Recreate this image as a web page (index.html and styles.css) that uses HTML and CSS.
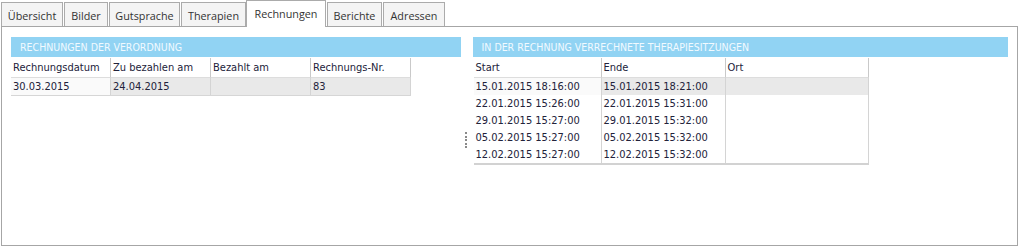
FILE: index.html
```html
<!DOCTYPE html>
<html lang="de">
<head>
<meta charset="utf-8">
<title>Rechnungen</title>
<link rel="stylesheet" href="styles.css">
</head>
<body>
<div class="tabs">
  <div class="tab w1">Übersicht</div>
  <div class="tab w2">Bilder</div>
  <div class="tab w3">Gutsprache</div>
  <div class="tab w4">Therapien</div>
  <div class="tab active w5">Rechnungen</div>
  <div class="tab w6">Berichte</div>
  <div class="tab w7">Adressen</div>
</div>
<div class="panel">
  <section class="left">
    <div class="band">RECHNUNGEN DER VERORDNUNG</div>
    <div class="grid gleft">
      <div class="hc">Rechnungsdatum</div>
      <div class="hc">Zu bezahlen am</div>
      <div class="hc">Bezahlt am</div>
      <div class="hc">Rechnungs-Nr.</div>
      <div class="dc sel focus">30.03.2015</div>
      <div class="dc sel">24.04.2015</div>
      <div class="dc sel"></div>
      <div class="dc sel">83</div>
    </div>
  </section>
  <div class="splitter"><div class="dots"></div></div>
  <section class="right">
    <div class="band">IN DER RECHNUNG VERRECHNETE THERAPIESITZUNGEN</div>
    <div class="grid gright">
      <div class="hc">Start</div>
      <div class="hc">Ende</div>
      <div class="hc">Ort</div>
      <div class="dc sel focus">15.01.2015 18:16:00</div>
      <div class="dc sel">15.01.2015 18:21:00</div>
      <div class="dc sel"></div>
      <div class="dc">22.01.2015 15:26:00</div>
      <div class="dc">22.01.2015 15:31:00</div>
      <div class="dc"></div>
      <div class="dc">29.01.2015 15:27:00</div>
      <div class="dc">29.01.2015 15:32:00</div>
      <div class="dc"></div>
      <div class="dc">05.02.2015 15:27:00</div>
      <div class="dc">05.02.2015 15:32:00</div>
      <div class="dc"></div>
      <div class="dc">12.02.2015 15:27:00</div>
      <div class="dc">12.02.2015 15:32:00</div>
      <div class="dc"></div>
    </div>
  </section>
</div>
</body>
</html>
```

FILE: styles.css
```css
html, body {
  margin: 0;
  padding: 0;
  background: #ffffff;
}
body {
  width: 1018px;
  height: 246px;
  overflow: hidden;
  font-family: "DejaVu Sans Condensed", "DejaVu Sans", sans-serif;
  font-size: 11px;
  color: #22223a;
}
.tabs {
  display: flex;
  align-items: flex-end;
  gap: 1px;
  height: 26px;
  padding-left: 1px;
  position: relative;
  z-index: 2;
}
.tab {
  box-sizing: border-box;
  height: 24px;
  border: 1px solid #ababab;
  border-bottom: none;
  background: #f4f4f4;
  font-family: "Open Sans", "Noto Sans", sans-serif;
  font-size: 10.8px;
  color: #333;
  display: flex;
  align-items: center;
  justify-content: center;
  padding-top: 2px;
}
.tab.active {
  height: 27px;
  margin-bottom: -1px;
  margin-left: -1px;
  background: #ffffff;
  padding-top: 0;
  padding-bottom: 2px;
}
.w1 { width: 62px; }
.w2 { width: 44px; }
.w3 { width: 71px; }
.w4 { width: 65px; }
.w5 { width: 80px; }
.w6 { width: 55px; }
.w7 { width: 62px; }

.panel {
  box-sizing: border-box;
  margin-left: 1px;
  width: 1017px;
  height: 220px;
  border: 1px solid #a6a6a6;
  padding: 10px 9px 0 9px;
  display: flex;
  align-items: flex-start;
}
.left { width: 450px; }
.right { width: 536px; }
.splitter {
  width: 12px;
  padding-top: 95px;
  display: flex;
  justify-content: center;
}
.dots {
  width: 2px;
  height: 18px;
  background: repeating-linear-gradient(to bottom, #8a8a8a 0 2px, transparent 2px 3.6px);
  margin-left: -2px;
}
.band {
  height: 20px;
  line-height: 20px;
  background: #91d3f3;
  color: #f2faff;
  padding-left: 9px;
  font-size: 10.5px;
  white-space: nowrap;
}
.grid {
  display: grid;
  margin-top: 1px;
}
.gleft {
  width: 400px;
  grid-template-columns: 100px 100px 100px 100px;
  border-bottom: 1px solid #d6d6d6;
}
.gright {
  width: 395px;
  margin-left: 1px;
  grid-template-columns: 128px 124px 143px;
  border-bottom: 2px solid #d2d2d2;
}
.hc {
  box-sizing: border-box;
  height: 20px;
  line-height: 20px;
  padding-left: 2px;
  border-right: 1px solid #c9c9c9;
  border-bottom: 1px solid #dddddd;
  white-space: nowrap;
}
.dc {
  box-sizing: border-box;
  height: 17px;
  line-height: 17px;
  padding-left: 2px;
  border-right: 1px solid #d4d4d4;
  white-space: nowrap;
}
.dc.sel { background: #e9e9e9; }
.dc.focus { background: #fafafa; }
```
